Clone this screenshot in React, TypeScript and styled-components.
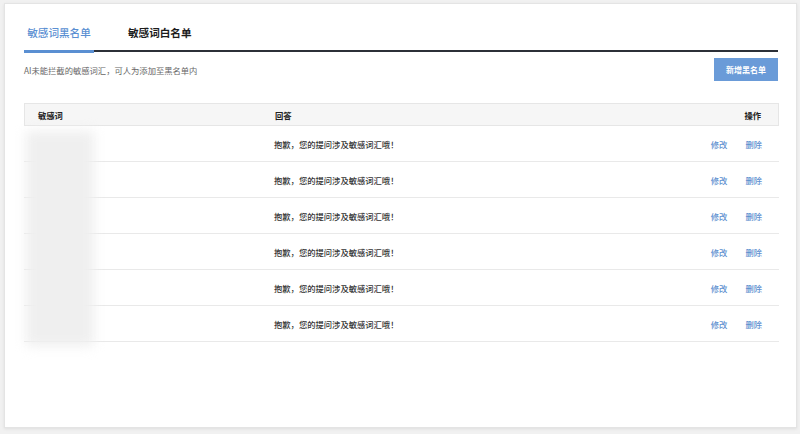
import React from "react";
import styled, { createGlobalStyle } from "styled-components";

const Global = createGlobalStyle`
  html, body { margin: 0; padding: 0; }
  body {
    background: #f1f1f1;
    font-family: "Noto Sans CJK SC", "Noto Sans", "Liberation Sans", sans-serif;
    width: 800px;
    height: 434px;
    overflow: hidden;
  }
  #root { padding: 3px 3px 0 4px; }
`;

const Card = styled.div`
  height: 425px;
  box-sizing: border-box;
  background: #ffffff;
  border: 1px solid #e4e4e4;
  box-shadow: 0 1px 3px rgba(0, 0, 0, 0.08);
  padding: 0 17px 0 19px;
`;

const TabBar = styled.div`
  display: flex;
  align-items: flex-end;
  padding-top: 22px;
  margin-right: 1px;
  border-bottom: 2px solid #2c3038;
`;

const Tab = styled.div<{ $active?: boolean }>`
  font-size: 10.6px;
  line-height: 14px;
  padding: 0 2px 10px;
  width: ${(p) => (p.$active ? "70px" : "auto")};
  box-sizing: border-box;
  text-align: center;
  margin-left: ${(p) => (p.$active ? "0" : "32px")};
  color: ${(p) => (p.$active ? "#5a8fd2" : "#1c1c1c")};
  font-weight: ${(p) => (p.$active ? 500 : 700)};
  ${(p) => (p.$active ? "border-bottom: 3px solid #5a8fd2; margin-bottom: -3px;" : "")}
`;

const Toolbar = styled.div`
  display: flex;
  justify-content: space-between;
  align-items: flex-start;
  margin-top: 6px;
  margin-right: 1px;
`;

const Hint = styled.div`
  font-size: 8.3px;
  line-height: 12px;
  padding-top: 6px;
  color: #666;
`;

const AddButton = styled.button`
  width: 64px;
  height: 23px;
  border: none;
  background: #6a9bd8;
  color: #fff;
  font-family: inherit;
  font-size: 8px;
  font-weight: 700;
  padding: 0;
  cursor: pointer;
`;

const Table = styled.div`
  margin-top: 22px;
  position: relative;
`;

const Row = styled.div<{ $head?: boolean }>`
  display: grid;
  grid-template-columns: 250px 1fr auto;
  align-items: center;
  box-sizing: border-box;
  height: ${(p) => (p.$head ? "23px" : "36px")};
  background: ${(p) => (p.$head ? "#f6f6f6" : "#fff")};
  border: ${(p) => (p.$head ? "1px solid #e6e6e6" : "none")};
  border-bottom: 1px solid ${(p) => (p.$head ? "#e6e6e6" : "#e9e9e9")};
  font-size: 8.3px;
  color: ${(p) => (p.$head ? "#222" : "#333")};
  font-weight: ${(p) => (p.$head ? 700 : 500)};
`;

const Cell = styled.div<{ $right?: boolean }>`
  padding-left: ${(p) => (p.$right ? "0" : "13px")};
  padding-right: ${(p) => (p.$right ? "17px" : "0")};
  display: flex;
  justify-content: ${(p) => (p.$right ? "flex-end" : "flex-start")};
  gap: 18px;
  &:nth-child(2) { padding-left: 0; }
`;

const Action = styled.span`
  color: #5d8fcf;
  font-weight: 500;
  cursor: pointer;
`;

const Mask = styled.div`
  position: absolute;
  left: 2px;
  top: 28px;
  width: 68px;
  height: 215px;
  background: #efefef;
  filter: blur(6px);
`;

const rows = Array.from({ length: 6 }, (_, i) => i);

export default function App() {
  return (
    <>
      <Global />
      <Card>
        <TabBar>
          <Tab $active>敏感词黑名单</Tab>
          <Tab>敏感词白名单</Tab>
        </TabBar>
        <Toolbar>
          <Hint>AI未能拦截的敏感词汇，可人为添加至黑名单内</Hint>
          <AddButton>新增黑名单</AddButton>
        </Toolbar>
        <Table>
          <Row $head>
            <Cell>敏感词</Cell>
            <Cell>回答</Cell>
            <Cell $right>操作</Cell>
          </Row>
          {rows.map((i) => (
            <Row key={i}>
              <Cell></Cell>
              <Cell>抱歉，您的提问涉及敏感词汇哦！</Cell>
              <Cell $right>
                <Action>修改</Action>
                <Action>删除</Action>
              </Cell>
            </Row>
          ))}
          <Mask />
        </Table>
      </Card>
    </>
  );
}
